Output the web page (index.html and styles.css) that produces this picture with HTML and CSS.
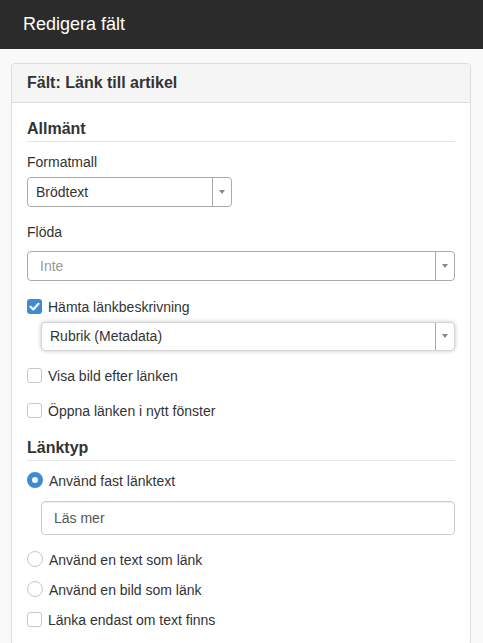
FILE: index.html
```html
<!DOCTYPE html>
<html lang="sv">
<head>
<meta charset="utf-8">
<title>Redigera fält</title>
<link rel="stylesheet" href="styles.css">
</head>
<body>
<header class="topbar">Redigera fält</header>
<div class="panel">
  <div class="panel-heading"><h3 class="panel-title">Fält: Länk till artikel</h3></div>
  <div class="panel-body">
    <div class="legend">Allmänt</div>

    <div class="group first">
      <div class="label">Formatmall</div>
      <div class="select small">
        <span class="select-text">Brödtext</span>
        <span class="select-arrow"><i class="tri"></i></span>
      </div>
    </div>

    <div class="group">
      <div class="label label-wide">Flöda</div>
      <div class="select">
        <span class="select-text placeholder">Inte</span>
        <span class="select-arrow"><i class="tri"></i></span>
      </div>
    </div>

    <div class="check-row row-hamta">
      <span class="box checked"><svg viewBox="0 0 15 15" width="15" height="15"><polyline points="3.5,7.8 6.3,10.4 11.5,4.8" fill="none" stroke="#fff" stroke-width="2.2" stroke-linecap="round" stroke-linejoin="round"/></svg></span>
      <span class="text">Hämta länkbeskrivning</span>
    </div>
    <div class="select indent raised">
      <span class="select-text">Rubrik (Metadata)</span>
      <span class="select-arrow"><i class="tri"></i></span>
    </div>

    <div class="check-row row-gap">
      <span class="box"></span>
      <span class="text">Visa bild efter länken</span>
    </div>
    <div class="check-row row-gap">
      <span class="box"></span>
      <span class="text">Öppna länken i nytt fönster</span>
    </div>

    <div class="legend second">Länktyp</div>

    <div class="check-row radio-first">
      <span class="radio checked"></span>
      <span class="text">Använd fast länktext</span>
    </div>
    <div class="input indent">Läs mer</div>
    <div class="check-row radio-after-input">
      <span class="radio"></span>
      <span class="text">Använd en text som länk</span>
    </div>
    <div class="check-row row-tight">
      <span class="radio"></span>
      <span class="text">Använd en bild som länk</span>
    </div>
    <div class="check-row row-tight">
      <span class="box"></span>
      <span class="text">Länka endast om text finns</span>
    </div>
  </div>
</div>
</body>
</html>
```
FILE: styles.css
```css
html, body {
  margin: 0;
  padding: 0;
  overflow: hidden;
}
body {
  background: #f9f9f9;
  font-family: "Liberation Sans", Arial, sans-serif;
  font-size: 14px;
  color: #333;
}
.topbar {
  height: 49px;
  line-height: 49px;
  background: #2b2b2b;
  color: #fff;
  font-size: 18px;
  padding-left: 23px;
}
.panel {
  margin: 14px 12px 0 11px;
  background: #fff;
  border: 1px solid #ddd;
  border-radius: 4px;
  box-shadow: 0 1px 1px rgba(0,0,0,.04);
}
.panel-heading {
  background: #f5f5f5;
  border-bottom: 1px solid #ddd;
  padding: 10px 15px;
  border-radius: 3px 3px 0 0;
}
.panel-title {
  margin: 0;
  font-size: 16px;
  line-height: 1.1;
  font-weight: bold;
  color: #333;
}
.panel-body {
  padding: 15px;
}
.legend {
  font-size: 16px;
  font-weight: bold;
  line-height: 22px;
  padding-bottom: 1px;
  border-bottom: 1px solid #e5e5e5;
}
.legend.second {
  margin-top: 16px;
}
.group {
  margin-top: 15px;
}
.group.first {
  margin-top: 10px;
}
.label {
  line-height: 20px;
  margin-bottom: 5px;
}
.label.label-wide {
  margin-bottom: 9px;
}
.select {
  display: flex;
  align-items: stretch;
  height: 30px;
  box-sizing: border-box;
  border: 1px solid #aaa;
  border-radius: 4px;
  background: #fff;
}
.select.small {
  width: 205px;
}
.select-text {
  flex: 1;
  display: flex;
  align-items: center;
  padding-left: 8px;
  color: #333;
}
.select-text.placeholder {
  color: #999;
  padding-left: 12px;
}
.select-arrow {
  width: 18px;
  border-left: 1px solid #aaa;
  display: flex;
  align-items: center;
  justify-content: center;
}
.tri {
  display: block;
  width: 0;
  height: 0;
  border-left: 3px solid transparent;
  border-right: 3px solid transparent;
  border-top: 4px solid #888;
}
.select.raised {
  height: 29px;
  margin-top: 5px;
  border-color: #d4d4d4;
  box-shadow: 0 0 4px rgba(0,0,0,.22);
}
.select.raised .select-arrow {
  border-left-color: #aaa;
}
.indent {
  margin-left: 14px;
}
.check-row {
  display: flex;
  align-items: flex-start;
  line-height: 20px;
}
.check-row .text {
  margin-left: 6px;
}
.row-hamta {
  margin-top: 16px;
}
.row-gap {
  margin-top: 15px;
}
.row-tight {
  margin-top: 10px;
}
.radio-first {
  margin-top: 10px;
}
.radio-after-input {
  margin-top: 15px;
}
.box {
  flex: none;
  width: 15px;
  height: 15px;
  box-sizing: border-box;
  margin-top: 2px;
  border: 1px solid #c8c8c8;
  border-radius: 3px;
  background: #fff;
}
.box.checked {
  border: none;
  background: #3f8bd2;
}
.box svg {
  display: block;
}
.radio {
  flex: none;
  width: 16px;
  height: 16px;
  box-sizing: border-box;
  margin-top: 1px;
  border: 1px solid #c8c8c8;
  border-radius: 50%;
  background: #fff;
}
.radio.checked {
  border: 5px solid #3f8bd2;
  background: #fff;
}
.input {
  margin-top: 10px;
  height: 34px;
  box-sizing: border-box;
  border: 1px solid #ccc;
  border-radius: 4px;
  padding-left: 12px;
  display: flex;
  align-items: center;
  color: #555;
  box-shadow: inset 0 1px 1px rgba(0,0,0,.06);
}
```
